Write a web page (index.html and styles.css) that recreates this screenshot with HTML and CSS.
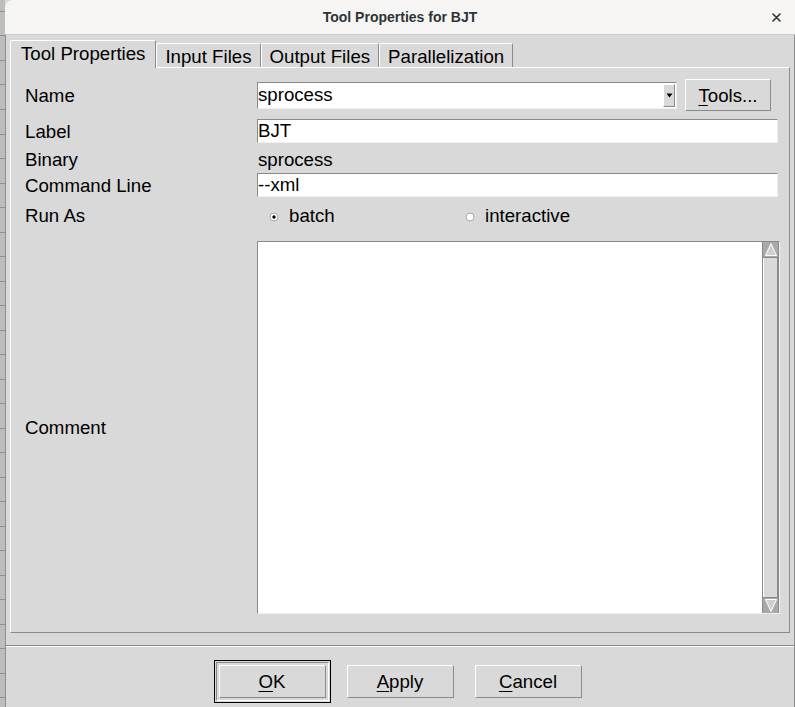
FILE: index.html
```html
<!DOCTYPE html>
<html lang="en">
<head>
<meta charset="utf-8">
<title>Tool Properties for BJT</title>
<link rel="stylesheet" href="styles.css">
</head>
<body>
<div class="screen">
  <div class="desk"></div>
  <div class="dialog">
    <header class="titlebar">
      <span></span>
      <span class="title">Tool Properties for BJT</span>
      <span class="close-cell">
        <svg class="close" width="9" height="9" viewBox="0 0 9 9"><path d="M1 1L8 8M8 1L1 8" stroke="#2e3436" stroke-width="1.6" stroke-linecap="round"/></svg>
      </span>
    </header>
    <div class="body">
      <div class="tabs">
        <div class="tab active">Tool Properties</div>
        <div class="tab">Input Files</div>
        <div class="tab">Output Files</div>
        <div class="tab">Parallelization</div>
      </div>
      <div class="panel">
        <div class="row r-name">
          <div class="lbl">Name</div>
          <div class="name-ctl">
            <div class="combo">
              <span class="combo-text">sprocess</span>
              <span class="combo-btn"><svg width="7" height="5" viewBox="0 0 7 5"><path d="M0.5 0.5H6.5L3.5 4.5Z" fill="#000"/></svg></span>
            </div>
            <button class="btn tools"><u>T</u>ools...</button>
          </div>
        </div>
        <div class="row r-label">
          <div class="lbl">Label</div>
          <div class="entry">BJT</div>
        </div>
        <div class="row r-binary">
          <div class="lbl">Binary</div>
          <div class="value">sprocess</div>
        </div>
        <div class="row r-cmd">
          <div class="lbl">Command Line</div>
          <div class="entry">--xml</div>
        </div>
        <div class="row r-runas">
          <div class="lbl">Run As</div>
          <div class="radios">
            <div class="radio"><svg width="10" height="10" viewBox="0 0 10 10"><circle cx="5" cy="5" r="4" fill="#fff" stroke="#a8a8a8" stroke-width="1"/><circle cx="5" cy="5" r="1.7" fill="#000"/></svg><span>batch</span></div>
            <div class="radio"><svg width="10" height="10" viewBox="0 0 10 10"><circle cx="5" cy="5" r="4" fill="#fff" stroke="#a8a8a8" stroke-width="1"/></svg><span>interactive</span></div>
          </div>
        </div>
        <div class="row r-comment">
          <div class="lbl">Comment</div>
          <div class="textarea">
            <div class="text-body"></div>
            <div class="scrollbar">
              <div class="sb-arrow"><svg width="14" height="15" viewBox="0 0 14 15"><path d="M7 1.5L12.5 13.5H1.5Z" fill="#cfcfcf" stroke="#fff" stroke-width="1"/></svg></div>
              <div class="sb-slider"></div>
              <div class="sb-arrow"><svg width="14" height="15" viewBox="0 0 14 15"><path d="M7 13.5L12.5 1.5H1.5Z" fill="#cfcfcf" stroke="#fff" stroke-width="1"/></svg></div>
            </div>
          </div>
        </div>
      </div>
      <div class="separator"></div>
      <div class="actions">
        <div class="default-ring"><div class="ring-frame"><button class="btn action"><u>O</u>K</button></div></div>
        <button class="btn action"><u>A</u>pply</button>
        <button class="btn action"><u>C</u>ancel</button>
      </div>
    </div>
  </div>
</div>
</body>
</html>
```

FILE: styles.css
```css
* { box-sizing: border-box; }
html, body { margin: 0; padding: 0; }
body {
  width: 795px;
  height: 707px;
  overflow: hidden;
  background: #d9d9d9;
  font-family: "Liberation Sans", Arial, sans-serif;
  font-size: 14pt;
  color: #000;
}
.screen { display: flex; height: 707px; }
.desk {
  flex: none;
  width: 5px;
  background: repeating-linear-gradient(180deg, #bdbdbd 0, #bdbdbd 11px, #8e8e8e 11px, #8e8e8e 12px, #bdbdbd 12px, #bdbdbd 24.5px);
}
.dialog { flex: 1; display: flex; flex-direction: column; min-width: 0; }
.titlebar {
  flex: none;
  height: 35px;
  background: #f6f5f4;
  border-bottom: 1px solid #cdcdcd;
  border-radius: 8px 0 0 0;
  display: grid;
  grid-template-columns: 1fr auto 1fr;
  align-items: center;
}
.title {
  font-size: 14px;
  font-weight: bold;
  color: #2e3436;
  padding-bottom: 1px;
}
.close-cell { display: flex; justify-content: flex-end; padding-right: 14px; }
.close { display: block; }
.body {
  flex: 1;
  display: flex;
  flex-direction: column;
  background: #d9d9d9;
  border-left: 1px solid #8c8c8c;
  border-right: 1px solid #8c8c8c;
  padding: 5px 4px 0;
}
.tabs { display: flex; align-items: flex-end; }
.tab {
  border: 1px solid;
  border-color: #fff #8a8a8a transparent #fff;
  border-bottom: 0;
  border-radius: 2px 2px 0 0;
  padding: 2px 8px 0;
  line-height: 21px;
  white-space: nowrap;
}
.tab.active {
  padding: 2px 10px 4px;
  margin-bottom: -1px;
  position: relative;
  z-index: 1;
  background: #d9d9d9;
}
.panel {
  flex: none;
  height: 566px;
  border: 1px solid;
  border-color: #fff #8a8a8a #8a8a8a #fff;
  padding: 11px 11px 0 14px;
  display: flex;
  flex-direction: column;
}
.row {
  display: grid;
  grid-template-columns: 232px 1fr;
  align-items: center;
}
.lbl { line-height: 21px; white-space: nowrap; }
.r-name { height: 32px; }
.r-label { height: 24px; margin-top: 8px; }
.r-binary { height: 21px; margin-top: 6px; }
.r-cmd { height: 24px; margin-top: 3px; }
.r-runas { height: 21px; margin-top: 8px; }
.r-comment { height: 373px; margin-top: 15px; }

.name-ctl { display: flex; align-items: center; }
.combo {
  width: 420px;
  height: 27px;
  display: flex;
  align-items: center;
  background: #fff;
  border: 1px solid;
  border-color: #8a8a8a #f0f0f0 #f0f0f0 #8a8a8a;
  padding-right: 1px;
}
.combo-text { flex: 1; line-height: 22px; }
.combo-btn {
  width: 12px;
  height: 23px;
  display: flex;
  align-items: center;
  justify-content: center;
  background: #d9d9d9;
  border: 1px solid;
  border-color: #fff #8a8a8a #8a8a8a #fff;
}
.combo-btn svg { display: block; }
.btn {
  font: inherit;
  color: #000;
  background: #d9d9d9;
  border: 1px solid;
  border-color: #fff #8a8a8a #8a8a8a #fff;
  padding: 0;
  margin: 0;
  line-height: 21px;
}
.btn u { text-decoration-thickness: 1px; text-underline-offset: 3px; }
.tools { width: 86px; height: 32px; margin-left: 8px; }
.entry {
  height: 24px;
  line-height: 22px;
  background: #fff;
  border: 1px solid;
  border-color: #8a8a8a #f0f0f0 #f0f0f0 #8a8a8a;
  white-space: nowrap;
}
.value { line-height: 21px; padding-left: 1px; }
.radios { display: grid; grid-template-columns: 196px auto; padding-left: 12px; }
.radio { display: flex; align-items: center; gap: 10px; line-height: 21px; }
.radio svg { display: block; margin-top: 3px; }
.textarea {
  height: 373px;
  display: flex;
  background: #fff;
  border: 1px solid;
  border-color: #8a8a8a #f0f0f0 #f0f0f0 #8a8a8a;
  margin-right: -2px;
}
.text-body { flex: 1; }
.scrollbar {
  width: 17px;
  display: flex;
  flex-direction: column;
  background: #d9d9d9;
  border-left: 1px solid #8a8a8a;
  border-right: 1px solid #8a8a8a;
}
.sb-arrow {
  height: 16px;
  background: #a9a9a9;
  border-bottom: 1px solid #8a8a8a;
  display: flex;
  align-items: center;
  justify-content: center;
}
.sb-arrow:last-child { border-bottom: 0; border-top: 1px solid #8a8a8a; }
.sb-arrow svg { display: block; }
.sb-slider {
  flex: 1;
  background: #d9d9d9;
  border-left: 1px solid #fff;
  border-right: 1px solid #8a8a8a;
}
.separator {
  flex: none;
  margin: 12px -4px 0;
  height: 2px;
  border-top: 1px solid #8a8a8a;
  border-bottom: 1px solid #fff;
}
.actions {
  display: flex;
  justify-content: center;
  gap: 21px;
  padding-top: 18px;
}
.action { width: 107px; height: 33px; }
.default-ring {
  margin: -5px;
  border: 1px solid #000;
  padding: 1px;
  display: flex;
}
.ring-frame {
  border: 1px solid;
  border-color: #8a8a8a #fff #fff #8a8a8a;
  padding: 2px;
  display: flex;
}
```
